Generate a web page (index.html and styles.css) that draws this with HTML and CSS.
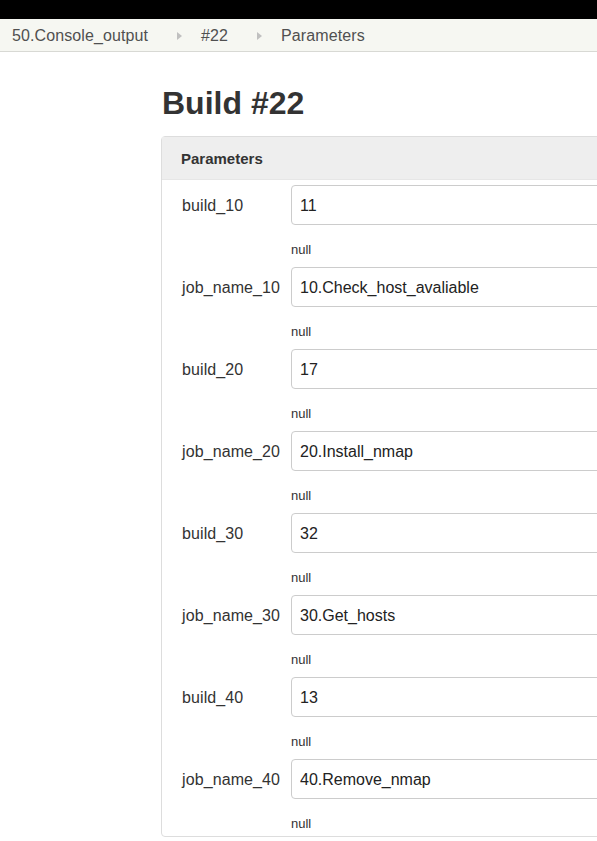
FILE: index.html
```html
<!DOCTYPE html>
<html>
<head>
<meta charset="utf-8">
<link rel="stylesheet" href="styles.css">
</head>
<body>
<div class="topbar"></div>
<nav class="crumbs">
  <span class="crumb">50.Console_output</span>
  <span class="sep"></span>
  <span class="crumb">#22</span>
  <span class="sep sep-2"></span>
  <span class="crumb">Parameters</span>
</nav>
<main class="main">
  <h1 class="title">Build #22</h1>
  <section class="panel">
    <div class="panel-head">Parameters</div>
    <div class="panel-body">
      <div class="row"><label class="label">build_10</label><div class="field"><input class="input" value="11"><div class="desc">null</div></div></div>
      <div class="row"><label class="label">job_name_10</label><div class="field"><input class="input" value="10.Check_host_avaliable"><div class="desc">null</div></div></div>
      <div class="row"><label class="label">build_20</label><div class="field"><input class="input" value="17"><div class="desc">null</div></div></div>
      <div class="row"><label class="label">job_name_20</label><div class="field"><input class="input" value="20.Install_nmap"><div class="desc">null</div></div></div>
      <div class="row"><label class="label">build_30</label><div class="field"><input class="input" value="32"><div class="desc">null</div></div></div>
      <div class="row"><label class="label">job_name_30</label><div class="field"><input class="input" value="30.Get_hosts"><div class="desc">null</div></div></div>
      <div class="row"><label class="label">build_40</label><div class="field"><input class="input" value="13"><div class="desc">null</div></div></div>
      <div class="row"><label class="label">job_name_40</label><div class="field"><input class="input" value="40.Remove_nmap"><div class="desc">null</div></div></div>
    </div>
  </section>
</main>
</body>
</html>
```
FILE: styles.css
```css
html, body {
  margin: 0;
  padding: 0;
  overflow: hidden;
}
body {
  font-family: "Liberation Sans", Arial, sans-serif;
  color: #333;
  background: #fff;
  width: 597px;
}
.topbar {
  height: 19px;
  background: #000;
}
.crumbs {
  height: 31px;
  padding-top: 1px;
  background: #f6f7f2;
  border-bottom: 1px solid #d8d9d4;
  display: flex;
  align-items: center;
  padding-left: 12px;
  font-size: 16px;
  letter-spacing: 0.1px;
  color: #505050;
}
.sep {
  width: 0;
  height: 0;
  border-top: 4px solid transparent;
  border-bottom: 4px solid transparent;
  border-left: 5px solid #c0c0c0;
  margin: 0 19px 0 29px;
}
.sep-2 {
  margin-left: 29px;
}
.main {
  padding-left: 161px;
  overflow: hidden;
}
.title {
  margin: 0;
  padding-top: 33px;
  padding-left: 1px;
  font-size: 32px;
  line-height: 37px;
  font-weight: bold;
  color: #333;
  height: 51px;
}
.panel {
  width: 620px;
  border: 1px solid #ddd;
  border-radius: 4px;
  background: #fff;
}
.panel-head {
  background: #eee;
  height: 42px;
  line-height: 43px;
  padding-left: 19px;
  font-weight: bold;
  font-size: 15px;
  color: #333;
  border-bottom: 1px solid #e6e6e6;
}
.row {
  display: flex;
  padding-top: 5px;
}
.label {
  width: 109px;
  padding-left: 20px;
  height: 40px;
  line-height: 41px;
  font-size: 16px;
  letter-spacing: 0.1px;
  flex: none;
}
.field {
  flex: 1;
}
.input {
  display: block;
  box-sizing: border-box;
  width: 100%;
  height: 40px;
  border: 1px solid #ccc;
  border-radius: 4px;
  padding: 1px 8px 0;
  font-family: "Liberation Sans", Arial, sans-serif;
  font-size: 16px;
  color: #222;
  background: #fff;
  margin: 0;
}
.desc {
  font-size: 13px;
  line-height: 14px;
  padding-top: 18px;
  padding-bottom: 5px;
  color: #333;
}
```
